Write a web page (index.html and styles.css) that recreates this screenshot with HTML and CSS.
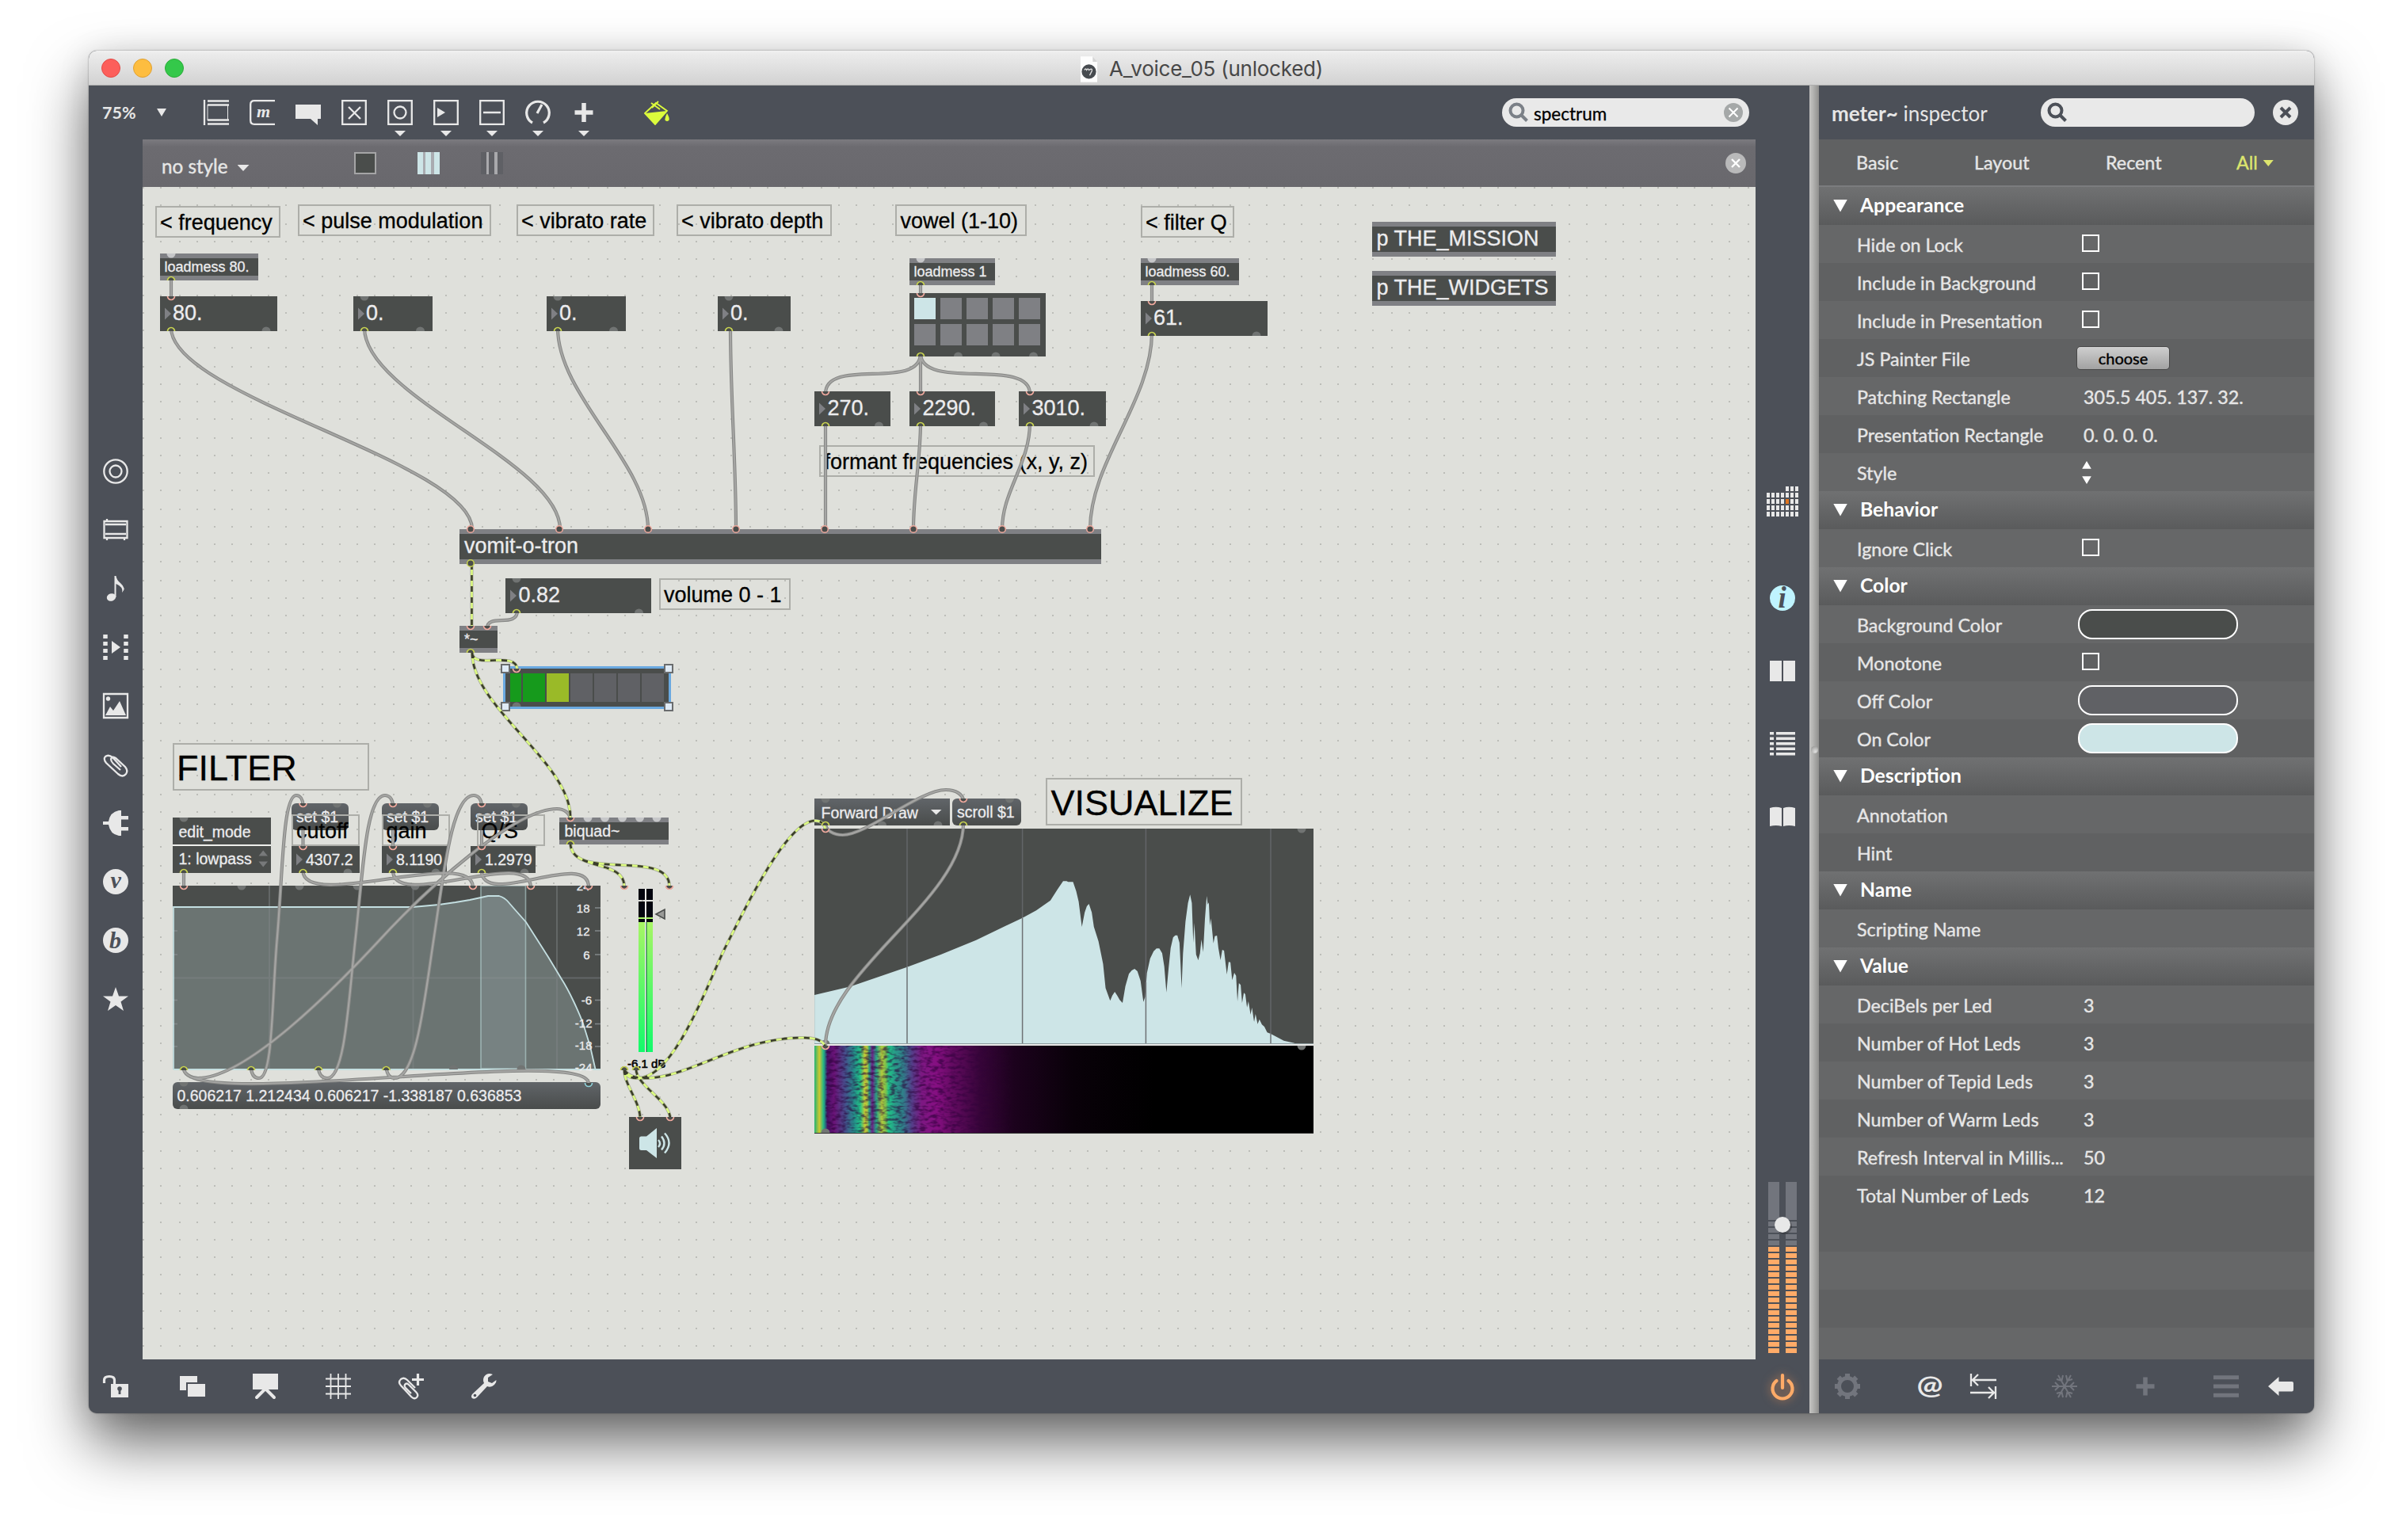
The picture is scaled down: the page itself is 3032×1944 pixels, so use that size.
FILE: index.html
```html
<!DOCTYPE html>
<html lang="en">
<head>
<meta charset="utf-8">
<title>A_voice_05 (unlocked)</title>
<link rel="stylesheet" href="styles.css">
</head>
<body>
<div class="window">
  <header class="titlebar">
    <div class="lights"><i class="light red"></i><i class="light amber"></i><i class="light green"></i></div>
    <div class="title">
      <svg class="doc" viewBox="0 0 24 34"><path d="M1 0H17L23 7V34H1Z" fill="#fdfdfd"/><path d="M17 0V7H23Z" fill="#d5d5d5"/><circle cx="12" cy="20" r="9.500" fill="#474b50"/><path d="M6 18q2-3 3 0q2-3 3 0q5-3 4 1l-3 6" fill="none" stroke="#ddd" stroke-width="1.400"/></svg>
      <span>A_voice_05 (unlocked)</span>
    </div>
  </header>
  <div class="content">
    <section class="patcher">
      <div class="toolbar">
        <span class="zoom">75%</span><i class="tri zoom-tri"></i>
        <div class="tools">
          <svg class="ic" viewBox="0 0 32 32"><path d="M1 0V32M5 1.500H32M5 6.500H32M5 25.500H32M5 30.500H32" class="s2"/><path d="M5 6V26M30.500 6V26" class="s1"/></svg>
          <svg class="ic" viewBox="0 0 32 32"><path d="M32 1.200H6Q1.200 1.200 1.200 6V26Q1.200 30.800 6 30.800H32" class="s2"/><text x="9" y="22" class="glyph g20">m</text></svg>
          <svg class="ic" viewBox="0 0 32 32"><path d="M0 6H32V24H28V32L19 24H0Z"/></svg>
          <svg class="ic" viewBox="0 0 32 32"><path d="M1.200 1.200H30.800V30.800H1.200ZM9 9L24 24M24 9L9 24" class="s2"/></svg>
          <div class="tool"><svg class="ic" viewBox="0 0 32 32"><path d="M1.200 1.200H30.800V30.800H1.200Z" class="s2"/><circle cx="16" cy="16" r="7.500" class="s2"/></svg><i class="tri small"></i></div>
          <div class="tool"><svg class="ic" viewBox="0 0 32 32"><path d="M1.200 1.200H30.800V30.800H1.200Z" class="s2"/><path d="M5 10L15 16L5 22Z"/></svg><i class="tri small"></i></div>
          <div class="tool"><svg class="ic" viewBox="0 0 32 32"><path d="M1.200 1.200H30.800V30.800H1.200ZM5 16H27" class="s2"/></svg><i class="tri small"></i></div>
          <div class="tool"><svg class="ic" viewBox="0 0 32 32"><path d="M9 29A14.300 14.300 0 1 1 23 29M15 17L21 6" class="s3"/></svg><i class="tri small"></i></div>
          <div class="tool"><svg class="ic" viewBox="0 0 32 32"><path d="M16 4V28M4.500 16H27.500" class="s5"/></svg><i class="tri small"></i></div>
        </div>
        <svg class="bucket" viewBox="0 0 32 32"><path d="M1 17L15 4L29 14L14 31Z" fill="none" stroke="#dcfb3c" stroke-width="1.800"/><path d="M1 17L29 14L14 31Z" fill="#dcfb3c"/><path d="M9 4L20 12M18 2L10 10" stroke="#dcfb3c" stroke-width="1.800"/><path d="M29 17q3.500 6 2.500 8.500q-2.500 3-5 0q-.5-3 2.500-8.500Z" fill="#dcfb3c"/></svg>
        <div class="search wide">
          <svg class="mag muted" viewBox="0 0 26 26"><circle cx="10.500" cy="10.500" r="8"/><path d="M16 16L23.500 23.500"/></svg>
          <span>spectrum</span>
          <svg class="clear" viewBox="0 0 24 24"><circle cx="12" cy="12" r="12" fill="#a5a8a8"/><path d="M6.500 6.500L17.500 17.500M17.500 6.500L6.500 17.500" stroke="#fff" stroke-width="2"/></svg>
        </div>
      </div>
      <div class="middle">
        <nav class="side left">
          <svg class="ic" viewBox="0 0 32 32"><circle cx="16" cy="16" r="14.700" class="s2"/><circle cx="16" cy="16" r="7.500" class="s2"/></svg>
          <svg class="ic" viewBox="0 0 32 32"><path d="M1.500 5H30.500V26H1.500ZM3 9H29M3 21H29M5 5V2M27 27V29M5 27V29" class="s2"/></svg>
          <svg class="ic" viewBox="0 0 32 32"><ellipse cx="10.500" cy="27" rx="5.800" ry="4.700" transform="rotate(-20 10.500 27)"/><path d="M14.500 0H16.500Q17 5 22 9Q30 16 24 21Q26 14 16.500 10V27H14.500Z"/></svg>
          <svg class="ic" viewBox="0 0 32 32"><path d="M3 0V32M29 0V32" fill="none" stroke="#e8e8e8" stroke-width="5.500" stroke-dasharray="5 4"/><path d="M11 8L22 16L11 24Z"/></svg>
          <svg class="ic" viewBox="0 0 32 32"><path d="M1 1H31V31H1Z" class="s2"/><circle cx="6.500" cy="7" r="2.700"/><path d="M3 28L9 17L13 22L21 10L29 28Z"/></svg>
          <svg class="ic" viewBox="0 0 32 32"><path d="M23 19L12 7Q7 3 3 6Q0 9 4 14L19 28Q25 33 29 28Q32 24 28 19L16 8Q12 5 10 9Q10 12 13 15L22 23" class="s2"/></svg>
          <svg class="ic" viewBox="0 0 32 32"><path d="M0 14H7Q9 2 20 0H23V7H32V11.500H23V21H32V25.500H23V32H20Q9 30 7 18H0Z"/></svg>
          <svg class="ic" viewBox="0 0 32 32"><circle cx="16" cy="16" r="16"/><text x="9.500" y="24" class="glyph cut">v</text></svg>
          <svg class="ic" viewBox="0 0 32 32"><circle cx="16" cy="16" r="16"/><text x="8" y="26" class="glyph cut">b</text></svg>
          <svg class="ic" viewBox="0 0 32 32"><path d="M16 1L20 12.500H32L22.500 19.500L26 31L16 24L6 31L9.500 19.500L0 12.500H12Z"/></svg>
        </nav>
        <div class="center">
          <div class="stylebar">
            <span>no style</span><i class="tri style-tri"></i>
            <i class="swatch solid"></i><i class="swatch light-bars"></i><i class="swatch dark-bars"></i>
            <svg class="close" viewBox="0 0 26 26"><circle cx="13" cy="13" r="13" fill="#b9b9ba"/><path d="M8 8L18 18M18 8L8 18" stroke="#fff" stroke-width="2.400"/></svg>
          </div>
          <svg class="canvas" viewBox="180 236 2036 1480">
            <defs>
              <pattern id="dots" x="180" y="236" width="90" height="90" patternUnits="userSpaceOnUse"><path d="M0 1h2m20 0h2m22 0h2m20 0h2M0 23h2m20 0h2m22 0h2m20 0h2M0 47h2m20 0h2m22 0h2m20 0h2M0 69h2m20 0h2m22 0h2m20 0h2" stroke="#bcbdb8" stroke-width="2"/></pattern>
              <linearGradient id="msg" x2="0" y2="1"><stop offset="0" stop-color="#616569"/><stop offset="1" stop-color="#494c4b"/></linearGradient>
              <linearGradient id="level" x2="0" y2="1"><stop offset="0" stop-color="#a8f565"/><stop offset="1" stop-color="#12fa6b"/></linearGradient>
              <linearGradient id="sono">
                <stop offset="0" stop-color="#22b375"/><stop offset=".010" stop-color="#cfc730"/><stop offset=".018" stop-color="#25b884"/><stop offset=".023" stop-color="#2b5f7c"/><stop offset=".026" stop-color="#4b1268"/><stop offset=".040" stop-color="#6a1478"/><stop offset=".062" stop-color="#45508c"/><stop offset=".080" stop-color="#238f88"/><stop offset=".092" stop-color="#22c487"/><stop offset=".101" stop-color="#c6ca36"/><stop offset=".106" stop-color="#a9c840"/><stop offset=".110" stop-color="#2b9f86"/><stop offset=".116" stop-color="#6d2288"/><stop offset=".124" stop-color="#27a486"/><stop offset=".135" stop-color="#b4ca3c"/><stop offset=".143" stop-color="#7cc24c"/><stop offset=".149" stop-color="#20c588"/><stop offset=".160" stop-color="#279f88"/><stop offset=".178" stop-color="#307f8a"/><stop offset=".195" stop-color="#534089"/><stop offset=".215" stop-color="#7c1882"/><stop offset=".245" stop-color="#860f82"/><stop offset=".275" stop-color="#650b63"/><stop offset=".33" stop-color="#38053a"/><stop offset=".40" stop-color="#1c021d"/><stop offset=".52" stop-color="#090109"/><stop offset=".68" stop-color="#000"/>
              </linearGradient>
              <filter id="grain" x="0" y="0" width="1" height="1" color-interpolation-filters="sRGB"><feTurbulence type="fractalNoise" baseFrequency=".13 .26" numOctaves="2" seed="4"/><feColorMatrix values="0 0 0 0 .17  0 0 0 0 0  0 0 0 0 .22  0 3.200 0 0 -1.350"/></filter>
              <linearGradient id="fade"><stop offset="0" stop-color="#fff"/><stop offset=".25" stop-color="#fff"/><stop offset=".38" stop-color="#000"/></linearGradient>
              <mask id="fademask"><rect x="1042" y="1320" width="616" height="110" fill="url(#fade)"/></mask>
              <g id="inlet"><path d="M-5 0A5 5 0 0 0 5 0Z" fill="#4a4d4b"/><path d="M-4.500 0A4.500 4.500 0 0 0 4.500 0" fill="none" stroke="#f0a99e" stroke-width="1.700"/></g>
              <g id="outlet"><path d="M-5 0A5 5 0 0 1 5 0Z" fill="#4a4d4b"/><path d="M-4.500 0A4.500 4.500 0 0 1 4.500 0" fill="none" stroke="#c9d451" stroke-width="1.700"/></g>
              <circle id="ring" r="4.300" fill="#4a4d4b" stroke="#f0a99e" stroke-width="1.500"/>
              <circle id="yring" r="4.300" fill="#4a4d4b" stroke="#c9d451" stroke-width="1.500"/>
              <path id="gi" d="M-5.500 0A5.500 5.500 0 0 0 5.500 0Z" fill="#717473"/>
              <path id="go" d="M-5.500 0A5.500 5.500 0 0 1 5.500 0Z" fill="#717473"/>
              <path id="li" d="M-5.500 0A5.500 5.500 0 0 0 5.500 0Z" fill="#c6c7c9"/>
              <path id="nt" d="M0 0L8 7.500L0 15Z" fill="#7f8084"/>
              <clipPath id="fclip"><rect x="218" y="1118" width="540" height="234"/></clipPath>
              <path id="cords" d="M216 350V378M1162 356V373M1454 356V383M216 414C216 500 596 584 596 668M460 414C460 500 707 584 707 668M704 414C704 500 818 584 818 668M922 414C922 500 929 584 929 668M1454 420C1454 505 1376 583 1376 668M1162 446C1162 494 1042 450 1042 497M1162 446V497M1162 446C1162 494 1300 450 1300 497M1042 534V668M1162 534C1162 580 1153 620 1153 668M1300 534C1300 585 1265 620 1265 668M653 771C653 793 615 774 615 793M382.500 1048V1070M496 1048V1070M608 1048V1070M232 1099V1121M382.500 1099C382.500 1151 597 1068 597 1120M496 1099C496 1151 670 1068 670 1120M608 1099C608 1148 743 1071 743 1120M232 1349C232 1404 743 1318 743 1368M232 1349C233 1356 241 1361 250 1361C310 1361 420 1250 476 1190C540 1120 650 1021 703 1021C712 1021 719 1026 720 1034M317 1349C318 1358 322 1361 327 1361C345 1361 343 1260 350 1182C357 1100 357 1004 374 1004C379 1004 382 1009 382.500 1016M402 1349C403 1358 408 1361 413 1361C436 1361 440 1260 449 1182C458 1100 462 1004 486 1004C491 1004 495 1008 496 1016M487.600 1349C489 1357 493 1361 498 1361C526 1361 536 1260 548 1182C560 1104 570 1004 598 1004C603 1004 607 1008 608 1016M1216 1040C1216 1135 1042 1227 1042 1320M1042 1040C1042 1048 1052 1054 1064 1054C1095 1054 1160 997 1194 997C1207 997 1215 1003 1216 1010"/>
              <path id="signals" d="M595.500 712V792M596 824C596 846 653 820 653 846M596 824C596 893 720 962 720 1032M720 1064C720 1100 788 1084 788 1119M720 1064C720 1114 845 1070 845 1119M788 1350C788 1370 808 1390 808 1412M803 1350C803 1370 846 1390 846 1412M788 1350C789 1358 795 1361 805 1361C852 1361 895 1237 915 1197C945 1137 995 1036 1029 1036C1036 1036 1041 1040 1042 1048M788 1350C792 1358 802 1361 815 1361C870 1361 930 1310 1013 1310C1030 1310 1040 1314 1042 1322"/>
            </defs>
            <rect x="180" y="236" width="2036" height="1480" fill="#dfe0db"/>
            <rect x="180" y="236" width="2036" height="1480" fill="url(#dots)"/>

            <g class="note"><rect x="197" y="261" width="156" height="38"/><rect x="377" y="259" width="242" height="38"/><rect x="653" y="259" width="172" height="38"/><rect x="855" y="259" width="194" height="38"/><rect x="1131" y="259" width="164" height="38"/><rect x="1441" y="261" width="116" height="38"/><rect x="1035" y="563" width="346" height="38"/><rect x="833" y="731" width="164" height="38"/><rect x="219" y="939" width="246" height="58"/><rect x="1321" y="983" width="246" height="58"/></g>
            <g class="t27 ink"><text x="202" y="290">&lt; frequency</text><text x="382" y="287.500">&lt; pulse modulation</text><text x="658" y="287.500">&lt; vibrato rate</text><text x="860" y="287.500">&lt; vibrato depth</text><text x="1136.500" y="287.500">vowel (1-10)</text><text x="1446" y="290">&lt; filter Q</text><text x="1040.500" y="592">formant frequencies (x, y, z)</text><text x="838" y="760">volume 0 - 1</text></g>
            <g class="t45 ink"><text x="223" y="984.500">FILTER</text><text x="1326.500" y="1028.500">VISUALIZE</text></g>

            <g fill="#7f8084"><rect x="202" y="320" width="124" height="34"/><rect x="1148" y="326" width="108" height="34"/><rect x="1440" y="326" width="124" height="34"/><rect x="1732" y="280" width="232" height="44"/><rect x="1732" y="342" width="232" height="44"/><rect x="580" y="668" width="810" height="44"/><rect x="580" y="790" width="48" height="34"/><rect x="706" y="1032" width="138" height="34"/></g>
            <g fill="#4a4d4b"><rect x="202" y="326" width="124" height="22"/><rect x="1148" y="332" width="108" height="22"/><rect x="1440" y="332" width="124" height="22"/><rect x="1732" y="286" width="232" height="32"/><rect x="1732" y="348" width="232" height="32"/><rect x="580" y="674" width="810" height="32"/><rect x="580" y="796" width="48" height="22"/><rect x="706" y="1038" width="138" height="22"/>
              <rect x="202" y="374" width="148" height="44"/><rect x="446" y="374" width="100" height="44"/><rect x="690" y="374" width="100" height="44"/><rect x="906" y="374" width="92" height="44"/><rect x="1440" y="380" width="160" height="44"/><rect x="1028" y="494" width="96" height="44"/><rect x="1148" y="494" width="108" height="44"/><rect x="1286" y="494" width="110" height="44"/><rect x="638" y="730" width="184" height="44"/><rect x="1148" y="370" width="172" height="80"/>
              <rect x="218" y="1032" width="124" height="34"/><rect x="218" y="1068" width="124" height="34"/><rect x="368" y="1068" width="86" height="34"/><rect x="482" y="1068" width="82" height="34"/><rect x="594" y="1068" width="82" height="34"/><rect x="794" y="1410" width="66" height="66"/></g>
            <rect x="218" y="1066" width="124" height="1.500" fill="#f4f4f2"/>
            <g class="t18 pale"><text x="207.500" y="343">loadmess 80.</text><text x="1153.500" y="348.500">loadmess 1</text><text x="1445.500" y="348.500">loadmess 60.</text><text x="586" y="813">*~</text></g>
            <g class="t27 pale"><text x="218" y="404">80.</text><text x="462" y="404">0.</text><text x="706" y="404">0.</text><text x="922" y="404">0.</text><text x="1456" y="410">61.</text><text x="1044.500" y="524">270.</text><text x="1164.500" y="524">2290.</text><text x="1302.500" y="524">3010.</text><text x="654.500" y="760">0.82</text><text x="1737.500" y="310">p THE_MISSION</text><text x="1737.500" y="372">p THE_WIDGETS</text><text x="586" y="698">vomit-o-tron</text></g>
            <g><use href="#nt" x="208" y="388.500"/><use href="#nt" x="452" y="388.500"/><use href="#nt" x="696" y="388.500"/><use href="#nt" x="912" y="388.500"/><use href="#nt" x="1446" y="394.500"/><use href="#nt" x="1034" y="508.500"/><use href="#nt" x="1154" y="508.500"/><use href="#nt" x="1292" y="508.500"/><use href="#nt" x="644" y="744.500"/><use href="#nt" x="374" y="1077.500"/><use href="#nt" x="488" y="1077.500"/><use href="#nt" x="600" y="1077.500"/></g>
            <g fill="#7f8084"><rect x="1187" y="376" width="27" height="27"/><rect x="1220" y="376" width="27" height="27"/><rect x="1253" y="376" width="27" height="27"/><rect x="1286" y="376" width="27" height="27"/><rect x="1154" y="409" width="27" height="27"/><rect x="1187" y="409" width="27" height="27"/><rect x="1220" y="409" width="27" height="27"/><rect x="1253" y="409" width="27" height="27"/><rect x="1286" y="409" width="27" height="27"/></g>
            <rect x="1154" y="376" width="27" height="27" fill="#cde5e7"/>

            <g fill="url(#msg)"><rect x="368" y="1014" width="72" height="34" rx="6"/><rect x="482" y="1014" width="72" height="34" rx="6"/><rect x="594" y="1014" width="72" height="34" rx="6"/><rect x="1028" y="1008" width="171" height="34"/><rect x="1202" y="1008" width="87" height="34" rx="6"/><rect x="218" y="1366" width="540" height="34" rx="6"/></g>
            <g class="t19 pale"><text x="374" y="1038">set $1</text><text x="488" y="1038">set $1</text><text x="600" y="1038">set $1</text><text x="1036.500" y="1032.500">Forward Draw</text><text x="1208" y="1032">scroll $1</text><text x="223.500" y="1389.500">0.606217 1.212434 0.606217 -1.338187 0.636853</text><text x="225.500" y="1057">edit_mode</text><text x="225.500" y="1091">1: lowpass</text><text x="386" y="1092">4307.2</text><text x="500" y="1092">8.1190</text><text x="612" y="1092">1.2979</text><text x="712.500" y="1056">biquad~</text></g>
            <path d="M1175 1022H1188.500L1181.700 1028.500Z" fill="#e8e8e8"/>
            <path d="M326.500 1080.500H338L332.200 1073.500ZM326.500 1087.500H338L332.200 1094.500Z" fill="#77797a"/>
            <g class="note"><rect x="369" y="1029" width="84" height="38"/><rect x="483" y="1029" width="84" height="38"/><rect x="603" y="1029" width="84" height="38"/></g>
            <g class="t27 ink"><text x="374" y="1058">cutoff</text><text x="487.500" y="1058">gain</text><text x="607.500" y="1058">Q/S</text></g>

            <rect x="218" y="1118" width="540" height="232" fill="#4a4d4b"/>
            <g clip-path="url(#fclip)">
              <path d="M219 1145H521L554 1142L575 1139L593 1136L607 1133L616 1131H630Q637 1133 642 1139T664 1164L692 1208L708 1234.500Q716 1247 724 1264T736 1292L745 1321L751.600 1350H219Z" fill="#6b7472"/>
              <path d="M340 1118V1350M521.500 1118V1350M703 1118V1350M218 1234.500H758" stroke="#83888a" stroke-opacity=".45" stroke-width="2"/>
              <path d="M218 1175h6m-6 30h6m-6 57.500h6m-6 30h6m-6 28.500h6M751 1146h7m-7 29h7m-7 30h7m-7 57.500h7m-7 30h7m-7 28.500h7" stroke="#83888a" stroke-width="1.500"/>
              <rect x="607" y="1118" width="56.500" height="231" fill="#a4b4bc" fill-opacity=".22" stroke="#b8d6d6" stroke-opacity=".6" stroke-width="1.600"/>
              <path d="M219 1350V1145H521L554 1142L575 1139L593 1136L607 1133L616 1131H630Q637 1133 642 1139T664 1164L692 1208L708 1234.500Q716 1247 724 1264T736 1292L745 1321L751.600 1350M219 1350H758" fill="none" stroke="#c4dfe1" stroke-width="1.800"/>
              <g class="t15 pale end"><text x="744.500" y="1124">24</text><text x="744.500" y="1151.600">18</text><text x="744.500" y="1180.500">12</text><text x="744.500" y="1211">6</text><text x="747" y="1268">-6</text><text x="747.500" y="1297">-12</text><text x="747.500" y="1325">-18</text><text x="747.500" y="1353">-24</text></g>
            </g>

            <path d="M806 1122h8v14h-8zM816 1122h8v14h-8zM806 1138h8v26h-8zM816 1138h8v26h-8z" fill="#03060f"/>
            <path d="M806 1158h18v2h-18z" fill="#a8f565"/>
            <rect x="806" y="1164" width="8" height="164" fill="url(#level)"/><rect x="816" y="1164" width="8" height="164" fill="url(#level)"/>
            <path d="M814.500 1122V1328" stroke="#f4f4f2" stroke-width="1"/><path d="M816 1164V1328" stroke="#0d5b3a" stroke-width="1"/>
            <path d="M828 1154L839 1148V1160Z" fill="#9a9b98" stroke="#4a4d4b" stroke-width="1.600"/>
            <text x="792" y="1347.500" class="t15 ink heavy">-6.1 dB</text>
            <path d="M807 1437Q807 1434.500 809.500 1434.500H816L829 1424V1462L816 1452H809.500Q807 1452 807 1449.500Z" fill="#cde5e7"/><path d="M831 1439q4 4.500 0 9M835 1434.500q7 9 0 17M839 1430.500q11 12 0 25" fill="none" stroke="#cde5e7" stroke-width="2.400"/>

            <rect x="636.500" y="842.500" width="209" height="51" fill="#4a4d4b" stroke="#6aa9e0" stroke-width="3"/>
            <path d="M644 850h14v36h-14zM660 850h28v36h-28z" fill="#169a1c"/><rect x="690" y="850" width="28" height="36" fill="#9aba28"/>
            <path d="M720 850h28v36h-28zM750 850h28v36h-28zM780 850h28v36h-28zM810 850h28v36h-28z" fill="#606165"/>
            <g fill="#dfeaf5" stroke="#6a6c6e" stroke-width="2"><rect x="633" y="839" width="10" height="10"/><rect x="839" y="839" width="10" height="10"/><rect x="633" y="887" width="10" height="10"/><rect x="839" y="887" width="10" height="10"/></g>

            <rect x="1028" y="1046" width="630" height="272" fill="#4a4d4b"/>
            <path d="M1145 1046V1318M1290.600 1046V1318M1446.400 1046V1318M1604 1046V1318" stroke="#636569" stroke-width="1.500"/>
            <path transform="translate(1000 960) scale(.44643 .33333)" fill="#cde5e7" d="M63 1073V888L165 856L325 782L420 735L520 680L651 596L690 568L730 530L750 488L766 457H776L780 460H794L803 495L810 535L819 630L827 575L833 552L839 543L847 575L853 630L866 685L879 770L886 862L899 910L905 890L912 876L919 890L926 907L934 918L942 855L952 808L960 795L968 789L976 798L985 835L993 914L998 895L1003 805L1012 750L1022 722L1030 712H1038L1046 730L1052 780L1058 878L1064 790L1070 710L1077 670L1083 662H1089L1095 690L1098 770L1101 862L1105 730L1112 610L1119 540L1125 508L1130 540L1134 690L1137 615L1142 735L1148 756L1153 730L1157 678L1162 725L1167 600L1172 513L1175 545L1178 538L1181 625L1184 598L1191 692L1195 665L1201 663L1205 710L1211 756L1216 717L1221 720L1229 810L1234 763L1239 764L1244 832L1250 804L1255 815L1259 912L1263 843L1268 850L1272 918L1277 880L1281 885L1286 935L1290 912L1296 962L1300 936L1306 990L1310 960L1316 998L1321 980L1328 1000L1335 1008L1343 1030L1353 1035L1370 1047L1390 1061L1420 1070L1423 1073Z"/>
            <path d="M1145 1221V1318M1290.600 1159V1318M1446.400 1240V1318M1604 1305V1318" stroke="#6e7175" stroke-width="1.500"/>
            <path d="M1028 1317.500H1658" stroke="#8c9b9e" stroke-width="1.200"/><path d="M1028 1319H1658" stroke="#eceeec" stroke-width="1.500"/>
            <rect x="1028" y="1320" width="630" height="110" fill="url(#sono)"/>
            <g mask="url(#fademask)"><rect x="1042" y="1320" width="616" height="110" filter="url(#grain)" opacity=".6"/></g>
            <path d="M1028 1430.500H1658" stroke="#333" stroke-width="1"/>

            <g><use href="#li" x="216" y="320"/><use href="#li" x="1162" y="326"/><use href="#li" x="1454" y="326"/><use href="#li" x="742" y="1032"/><use href="#li" x="763.500" y="1032"/><use href="#li" x="785.500" y="1032"/><use href="#li" x="807.500" y="1032"/><use href="#li" x="829" y="1032"/>
              <use href="#gi" x="460" y="374"/><use href="#gi" x="704" y="374"/><use href="#gi" x="920" y="374"/><use href="#gi" x="652" y="730"/><use href="#gi" x="232" y="1032"/><use href="#gi" x="425.500" y="1014"/><use href="#gi" x="539.500" y="1014"/><use href="#gi" x="651.500" y="1014"/><use href="#gi" x="305" y="1118"/><use href="#gi" x="378" y="1118"/><use href="#gi" x="451" y="1118"/><use href="#gi" x="524" y="1118"/><use href="#gi" x="1042" y="1008"/><use href="#gi" x="1274.500" y="1008"/><use href="#gi" x="1643" y="1046"/><use href="#gi" x="1643" y="1320"/><use href="#gi" x="232" y="1366"/>
              <use href="#go" x="336" y="418"/><use href="#go" x="530.500" y="418"/><use href="#go" x="774.500" y="418"/><use href="#go" x="983" y="418"/><use href="#go" x="1586" y="424"/><use href="#go" x="1109.500" y="538"/><use href="#go" x="1241.500" y="538"/><use href="#go" x="1381" y="538"/><use href="#go" x="806.500" y="774"/><use href="#go" x="1209.500" y="450"/><use href="#go" x="1257" y="450"/><use href="#go" x="1304.500" y="450"/><use href="#go" x="439" y="1102"/><use href="#go" x="550" y="1102"/><use href="#go" x="662" y="1102"/><use href="#go" x="572.500" y="1350"/><use href="#go" x="658" y="1350"/><use href="#go" x="1113.500" y="1042"/><use href="#go" x="1184" y="1042"/><use href="#go" x="232" y="1400"/><use href="#go" x="1042" y="1318"/><use href="#go" x="1042" y="1430"/><use href="#go" x="652" y="892"/></g>

            <g fill="none">
              <use href="#cords" class="cord-edge"/><use href="#cords" class="cord"/>
              <use href="#signals" class="sig-edge"/><use href="#signals" class="sig"/><use href="#signals" class="sig-dash"/>
            </g>
            <g><use href="#ring" x="594" y="668"/><use href="#ring" x="706" y="668"/><use href="#ring" x="818" y="668"/><use href="#ring" x="929" y="668"/><use href="#ring" x="1041" y="668"/><use href="#ring" x="1153" y="668"/><use href="#ring" x="1265" y="668"/><use href="#ring" x="1376" y="668"/><use href="#yring" x="594" y="711"/>
              <use href="#inlet" x="216" y="374"/><use href="#inlet" x="1162" y="370"/><use href="#inlet" x="1454" y="380"/><use href="#inlet" x="1042" y="494"/><use href="#inlet" x="1162" y="494"/><use href="#inlet" x="1300" y="494"/><use href="#inlet" x="594" y="790"/><use href="#inlet" x="615" y="790"/><use href="#inlet" x="652" y="844"/><use href="#inlet" x="382.500" y="1014"/><use href="#inlet" x="496" y="1014"/><use href="#inlet" x="608" y="1014"/><use href="#inlet" x="382.500" y="1068"/><use href="#inlet" x="496" y="1068"/><use href="#inlet" x="608" y="1068"/><use href="#inlet" x="232" y="1118"/><use href="#inlet" x="597" y="1118"/><use href="#inlet" x="670" y="1118"/><use href="#inlet" x="743" y="1118"/><use href="#inlet" x="720" y="1032"/><use href="#inlet" x="788" y="1118"/><use href="#inlet" x="845" y="1118"/><use href="#inlet" x="808" y="1410"/><use href="#inlet" x="846" y="1410"/><use href="#inlet" x="1042" y="1046"/><use href="#inlet" x="1216" y="1008"/><use href="#inlet" x="1042" y="1320"/>
              <path d="M738.500 1367A4.500 4.500 0 0 0 747.500 1367" fill="#4a4d4b" stroke="#8fd3dc" stroke-width="1.700"/>
              <use href="#outlet" x="216" y="354"/><use href="#outlet" x="1162" y="360"/><use href="#outlet" x="1454" y="360"/><use href="#outlet" x="216" y="418"/><use href="#outlet" x="460" y="418"/><use href="#outlet" x="704" y="418"/><use href="#outlet" x="920" y="418"/><use href="#outlet" x="1454" y="424"/><use href="#outlet" x="1162" y="450"/><use href="#outlet" x="1042" y="538"/><use href="#outlet" x="1162" y="538"/><use href="#outlet" x="1300" y="538"/><use href="#outlet" x="652" y="774"/><use href="#outlet" x="594" y="824"/><use href="#outlet" x="232" y="1102"/><use href="#outlet" x="382.500" y="1102"/><use href="#outlet" x="496" y="1102"/><use href="#outlet" x="608" y="1102"/><use href="#outlet" x="720" y="1066"/><use href="#outlet" x="232" y="1351"/><use href="#outlet" x="317" y="1351"/><use href="#outlet" x="402" y="1351"/><use href="#outlet" x="487.500" y="1351"/><use href="#outlet" x="788" y="1351"/><use href="#outlet" x="803" y="1351"/><use href="#outlet" x="1042" y="1042"/><use href="#outlet" x="1216" y="1042"/></g>
          </svg>
        </div>
        <nav class="side right">
          <svg class="keys" viewBox="0 0 40 38"><path d="M24 3H40M0 11H40M0 19H40M0 27H40M0 35H40" fill="none" stroke="#e8e8e8" stroke-width="6" stroke-dasharray="4 2"/><rect x="24" y="16" width="4" height="6" fill="#e0741e"/></svg>
          <svg class="ic info" viewBox="0 0 32 32"><circle cx="16" cy="16" r="16" fill="#bff4ff"/><text x="10.500" y="28" class="glyph cut g34">i</text></svg>
          <svg class="ic cols" viewBox="0 0 32 32"><path d="M0 3H15V29H0ZM17 3H32V29H17Z"/></svg>
          <svg class="ic list" viewBox="0 0 32 32"><path d="M0 1H5V4.500H0ZM8 1H32V4.500H8ZM0 7.500H5V11H0ZM8 7.500H32V11H8ZM0 14H5V17.500H0ZM8 14H32V17.500H8ZM0 20.500H5V24H0ZM8 20.500H32V24H8ZM0 27H5V30.500H0ZM8 27H32V30.500H8Z"/></svg>
          <svg class="ic book" viewBox="0 0 32 32"><path d="M0 5Q8 2.500 15 5V28Q8 26 0 28ZM17 5Q24 2.500 32 5V28Q24 26 17 28Z"/></svg>
          <svg class="volume" viewBox="0 0 40 218"><g fill="none" stroke-width="14"><path d="M9 0V48M31 0V48" stroke="#72757d"/><path d="M9 50V80M31 50V80" stroke="#72757d" stroke-dasharray="6 2"/><path d="M9 82V216M31 82V216" stroke="#ffab68" stroke-dasharray="6 2"/></g><circle cx="22" cy="56" r="10" fill="#000" opacity=".25"/><circle cx="20" cy="54" r="10" fill="#e8e8e8"/></svg>
        </nav>
      </div>
      <div class="bottombar">
        <svg class="ic lock" viewBox="0 0 32 32"><path d="M1.500 12V8Q1.500 3.500 8 3.500T14.500 8V14" class="s3"/><path d="M10 13H32V30H10Z"/><circle cx="21" cy="19" r="2.800" fill="#4c5058"/><path d="M19.600 20H22.400V26H19.600Z" fill="#4c5058"/></svg>
        <svg class="ic" viewBox="0 0 32 32"><path d="M0 3H22V11H8V21H0ZM10 13H32V29H10Z"/></svg>
        <svg class="ic" viewBox="0 0 32 32"><path d="M0 0H32V20H0Z"/><path d="M15 20L5 30M17 20L27 30" class="s4"/></svg>
        <svg class="ic" viewBox="0 0 32 32"><path d="M6.500 0V32M16 0V32M25.500 0V32M0 6.500H32M0 16H32M0 25.500H32" class="s2 thin"/></svg>
        <svg class="ic" viewBox="0 0 32 32"><path d="M21 18L11 8Q7 4 3 7Q-1 11 3 15L16 29Q20 33 23 30Q26 27 22 23L13 14Q10 11 8 14Q7 16 9 18L16 25" class="s2"/><path d="M24.500 0V15M17 7.500H32" class="s3"/></svg>
        <svg class="ic" viewBox="0 0 32 32"><path d="M27 1Q20-2 16 4Q14 8 16 12L1 26Q-1 29 1 31Q4 33 7 30L20 16Q25 18 29 14Q32 11 31.500 8L26 12L21 10V5Z"/><circle cx="4.500" cy="27.500" r="1.800" fill="#4c5058"/></svg>
        <svg class="ic power" viewBox="0 0 32 32"><path d="M8.500 9A12.500 12.500 0 1 0 23.500 9M16 2V18" fill="none" stroke="#ffab68" stroke-width="4.200" stroke-linecap="round"/></svg>
      </div>
    </section>
    <div class="divider"><i class="grip"></i></div>
    <aside class="inspector">
      <div class="ihead">
        <span class="iname"><b>meter~</b> inspector</span>
        <div class="search narrow"><svg class="mag" viewBox="0 0 26 26"><circle cx="10.500" cy="10.500" r="8"/><path d="M16 16L23.500 23.500"/></svg></div>
        <svg class="ic" viewBox="0 0 32 32"><circle cx="16" cy="16" r="16"/><path d="M10 10L22 22M22 10L10 22" stroke="#4c5058" stroke-width="4"/></svg>
      </div>
      <div class="tabs"><span>Basic</span><span>Layout</span><span>Recent</span><span class="on">All<i class="tri all-tri"></i></span></div>
      <div class="rows">
        <h2>Appearance</h2>
        <div class="row"><label>Hide on Lock</label><i class="check"></i></div>
        <div class="row alt"><label>Include in Background</label><i class="check"></i></div>
        <div class="row"><label>Include in Presentation</label><i class="check"></i></div>
        <div class="row alt"><label>JS Painter File</label><span class="choose">choose</span></div>
        <div class="row"><label>Patching Rectangle</label><span>305.5 405. 137. 32.</span></div>
        <div class="row alt"><label>Presentation Rectangle</label><span>0. 0. 0. 0.</span></div>
        <div class="row"><label>Style</label><svg class="stepper" viewBox="0 0 12 30"><path d="M0 10L6 0L12 10ZM0 20L6 30L12 20Z"/></svg></div>
        <h2>Behavior</h2>
        <div class="row"><label>Ignore Click</label><i class="check"></i></div>
        <h2>Color</h2>
        <div class="row"><label>Background Color</label><i class="pill bg"></i></div>
        <div class="row alt"><label>Monotone</label><i class="check"></i></div>
        <div class="row"><label>Off Color</label><i class="pill off"></i></div>
        <div class="row alt"><label>On Color</label><i class="pill lit"></i></div>
        <h2>Description</h2>
        <div class="row"><label>Annotation</label></div>
        <div class="row alt"><label>Hint</label></div>
        <h2>Name</h2>
        <div class="row"><label>Scripting Name</label></div>
        <h2>Value</h2>
        <div class="row"><label>DeciBels per Led</label><span>3</span></div>
        <div class="row alt"><label>Number of Hot Leds</label><span>3</span></div>
        <div class="row"><label>Number of Tepid Leds</label><span>3</span></div>
        <div class="row alt"><label>Number of Warm Leds</label><span>3</span></div>
        <div class="row"><label>Refresh Interval in Millis...</label><span>50</span></div>
        <div class="row alt"><label>Total Number of Leds</label><span>12</span></div>
        <div class="row alt"></div><div class="row"></div><div class="row alt"></div><div class="row"></div>
      </div>
      <div class="ifoot">
        <svg class="ic" viewBox="0 0 32 32"><circle cx="16" cy="16" r="10.500" fill="none" stroke="#72757d" stroke-width="5"/><path d="M16 0V4M16 28V32M0 16H4M28 16H32M4.700 4.700L7.500 7.500M24.500 24.500L27.300 27.300M27.300 4.700L24.500 7.500M7.500 24.500L4.700 27.300" stroke="#72757d" stroke-width="6"/></svg>
        <svg class="ic at" viewBox="0 0 32 32"><text x="-.5" y="25.500" class="at-sign" textLength="33" lengthAdjust="spacingAndGlyphs">@</text></svg>
        <svg class="ic tabsic" viewBox="0 0 33 32"><path d="M1 0V16M2 8H33M10 1L3 8L10 15M32 16V32M0 24H31M23 17L30 24L23 31" class="s2"/></svg>
        <svg class="ic snow" viewBox="0 0 32 32"><path d="M0 16H32M8 2L24 30M24 2L8 30M4 11L9 16L4 21M28 11L23 16L28 21M6 7L12.500 9L14 2M26 25L19.500 23L18 30M26 7L19.500 9L18 2M6 25L12.500 23L14 30" fill="none" stroke="#72757d" stroke-width="2"/></svg>
        <svg class="ic plus" viewBox="0 0 32 32"><path d="M16 4.500V27.500M4.500 16H27.500" fill="none" stroke="#72757d" stroke-width="5.500"/></svg>
        <svg class="ic bars" viewBox="0 0 32 32"><path d="M0 4.800H32M0 16H32M0 27.200H32" fill="none" stroke="#72757d" stroke-width="5"/></svg>
        <svg class="ic" viewBox="0 0 32 32"><path d="M0 16L13.500 4V10H30Q32 10 32 12V20Q32 22.500 30 22.500H13.500V28Z"/></svg>
      </div>
    </aside>
  </div>
</div>
</body>
</html>
```
FILE: styles.css
```css
* { box-sizing: border-box; }
body { margin: 0; width: 3032px; height: 1944px; padding: 64px 112px; background: #fff; overflow: hidden; font-family: Lato, "Open Sans", sans-serif; color: #e6e6e6; }
i { font-style: normal; display: block; }
svg { display: block; flex: none; }
.window { width: 2809px; height: 1720px; border-radius: 10px; overflow: hidden; background: #4c5058; box-shadow: 0 0 2px rgba(0,0,0,.45), 0 38px 76px rgba(0,0,0,.58), 0 6px 40px rgba(0,0,0,.12); }
.titlebar { height: 44px; display: grid; grid-template-columns: 1fr auto 1fr; align-items: center; padding: 0 16px; background: linear-gradient(#f1f1f1, #ebebeb 10%, #d2d2d2); border-bottom: 1px solid #adadad; }
.lights { display: flex; gap: 16px; }
.light { width: 24px; height: 24px; border-radius: 50%; }
.red { background: #fc5f5b; border: 1px solid #e24b47; }
.amber { background: #fdbd40; border: 1px solid #dfa032; }
.green { background: #34c84a; border: 1px solid #2aab38; }
.title { display: flex; align-items: center; gap: 14px; font: 26px/42px Inter, sans-serif; color: #474747; letter-spacing: -.25px; padding-top: 2px; }
.doc { width: 23px; height: 33px; }
.content { display: flex; height: 1676px; }
.patcher { width: 2172px; display: flex; flex-direction: column; }
.ic { width: 32px; height: 32px; fill: #e8e8e8; overflow: visible; }
.s1, .s2, .s3, .s4, .s5 { fill: none; stroke: #e8e8e8; stroke-width: 2.300; }
.s1 { stroke-width: 1; }
.s3 { stroke-width: 3.200; }
.s4 { stroke-width: 4; stroke-linecap: round; }
.s5 { stroke-width: 5.500; }
.thin { stroke-width: 1.800; }
.glyph { font-family: "Liberation Serif", serif; font-style: italic; font-weight: bold; font-size: 30px; }
.g20 { font-size: 22px; }
.g34 { font-size: 37px; }
.cut { fill: #4c5058; }
.tri { width: 14px; height: 8px; background: #e8e8e8; clip-path: polygon(0 0, 100% 0, 50% 100%); flex: none; }
.small { height: 7px; }

.toolbar { height: 68px; display: flex; align-items: center; padding: 0 76px 0 17px; flex: none; }
.zoom { font-size: 21.500px; font-weight: 700; width: 69px; }
.zoom-tri { width: 12px; height: 10px; margin-right: 47px; }
.tools { display: flex; gap: 26px; }
.tool { height: 32px; display: flex; flex-direction: column; gap: 7px; align-items: center; }
.bucket { width: 32px; height: 32px; margin-left: 60px; }
.search { height: 36px; border-radius: 18px; background: #e9e9e9; display: flex; align-items: center; padding: 0 8px; }
.wide { width: 312px; margin-left: auto; color: #000; font-size: 22.500px; gap: 6px; -webkit-text-stroke: .3px #000; }
.wide span { padding-top: 2px; }
.clear { width: 24px; height: 24px; margin-left: auto; }
.mag { width: 26px; height: 26px; fill: none; stroke: #4c5058; stroke-width: 4; }
.muted { stroke: #7b8087; }

.middle { display: flex; height: 1540px; flex: none; }
.side { width: 68px; display: flex; flex-direction: column; align-items: center; flex: none; }
.left { padding-top: 403px; gap: 42px; }
.center { width: 2036px; }
.stylebar { height: 60px; display: flex; align-items: center; padding: 7px 12px 0 24px; font-size: 24.200px; -webkit-text-stroke: .4px #e6e6e6; background: linear-gradient(#7b7a7f, #6c6b70 16%, #69686d); }
.style-tri { width: 15px; margin: 5px 132px 0 12px; }
.swatch { width: 28px; height: 28px; margin: 0 52px 0 0; flex: none; position: relative; top: -4px; }
.solid { background: #4a4d4b; border: 2px solid #a5a5a6; }
.light-bars { background: linear-gradient(90deg, #cde5e7 25%, #a9abb0 25% 37%, #cde5e7 37% 62%, #a9abb0 62% 74%, #cde5e7 74%); }
.dark-bars { background: linear-gradient(90deg, #5f6065 25%, #a9a9ac 25% 37%, #5f6065 37% 62%, #a9a9ac 62% 74%, #5f6065 74%); }
.close { width: 26px; height: 26px; margin: 0 0 8px auto; }
.canvas { width: 2036px; height: 1480px; font-family: "Liberation Sans", Arial, sans-serif; }
.note rect { fill: none; stroke: #adaea9; stroke-width: 2; }
.ink { fill: #000; stroke: #000; stroke-width: .3; }
.pale { fill: #ececee; stroke: #ececee; stroke-width: .3; }
.t15 { font-size: 15px; }
.t18 { font-size: 18px; }
.t19 { font-size: 19.500px; }
.t27 { font-size: 27px; }
.t45 { font-size: 45px; }
.end { text-anchor: end; }
.heavy { stroke-width: .6; }
.cord-edge { stroke: #868785; stroke-width: 4.200; }
.cord { stroke: #a5a5a3; stroke-width: 2.200; }
.sig-edge { stroke: #a3a699; stroke-width: 4; }
.sig { stroke: #dcfb80; stroke-width: 2.600; }
.sig-dash { stroke: #3a3c2c; stroke-width: 2.600; stroke-dasharray: 7 7; }

.right { padding-top: 438px; }
.keys { width: 40px; height: 38px; }
.info { margin-top: 87px; }
.cols { margin-top: 60px; }
.list { margin-top: 60px; }
.book { margin-top: 60px; }
.volume { width: 40px; height: 218px; margin-top: 445px; }
.bottombar { height: 68px; display: flex; align-items: center; gap: 60px; padding: 0 18px; flex: none; }
.lock { margin-right: 5px; }
.power { margin-left: auto; filter: drop-shadow(0 0 6px rgba(255,150,80,.6)); }
.divider { width: 12px; background: linear-gradient(90deg, #c3c3c1, #b5b5b3 35%, #8f8f8d); display: flex; align-items: center; flex: none; }
.grip { width: 9px; height: 9px; border-radius: 50%; background: radial-gradient(circle at 60% 75%, #e0e0df, #8b8b89); margin-left: 2px; }

.inspector { width: 625px; display: flex; flex-direction: column; }
.ihead { height: 68px; display: flex; align-items: center; padding: 0 20px 0 16px; flex: none; }
.iname { font-size: 26px; width: 264px; padding-top: 1px; }
.narrow { width: 270px; margin-right: 23px; }
.tabs { height: 60px; display: grid; grid-template-columns: 149px 166px 165px auto; padding: 0 0 0 47px; background: #606162; border-bottom: 2px solid #7b7c7e; font-size: 23.300px; line-height: 58px; -webkit-text-stroke: .4px; flex: none; }
.on { color: #dde56e; display: flex; align-items: center; gap: 7px; }
.all-tri { background: #dde56e; width: 13px; margin-top: 2px; }
.rows { height: 1480px; overflow: hidden; background: #666768; }
.rows h2 { margin: 0; height: 48px; font-size: 24.700px; line-height: 45px; font-weight: 700; color: #fff; background: linear-gradient(#707172, #5a5b5c); display: flex; align-items: center; gap: 16px; padding: 0 0 3px 18px; }
.rows h2::before { content: ""; width: 18px; height: 16px; margin-top: 2px; background: #fff; clip-path: polygon(0 0, 100% 0, 50% 100%); }
.row { height: 48px; display: flex; align-items: center; padding-left: 48px; font-size: 23.250px; line-height: 46px; background: #666768; white-space: nowrap; -webkit-text-stroke: .4px; }
.alt { background: #606162; }
.row label { width: 286px; padding-top: 2px; }
.row span { padding-top: 2px; }
.check { width: 22px; height: 22px; border: 2px solid #fff; margin: 0 0 2px -2px; }
.row .choose { width: 118px; height: 30px; padding: 0; margin-left: -9px; margin-bottom: 1px; border: 1px solid #484848; border-radius: 5px; background: linear-gradient(#cfcfcf, #a2a2a2); color: #000; font-size: 20px; line-height: 29px; text-align: center; }
.stepper { width: 12px; height: 29px; fill: #fff; margin-left: -2px; }
.pill { width: 202px; height: 38px; border: 2px solid #fff; border-radius: 18px; margin-left: -7px; }
.bg { background: #4a4d4b; }
.off { background: #606165; }
.lit { background: #cde5e7; }
.ifoot { height: 68px; display: flex; align-items: center; padding-left: 20px; flex: none; }
.at { margin-left: 72px; }
.at-sign { font: 700 32px Lato, sans-serif; }
.tabsic { width: 33px; margin-left: 35px; }
.snow { margin-left: 70px; }
.plus { margin-left: 70px; }
.bars { margin: 0 37px 0 70px; }
```
